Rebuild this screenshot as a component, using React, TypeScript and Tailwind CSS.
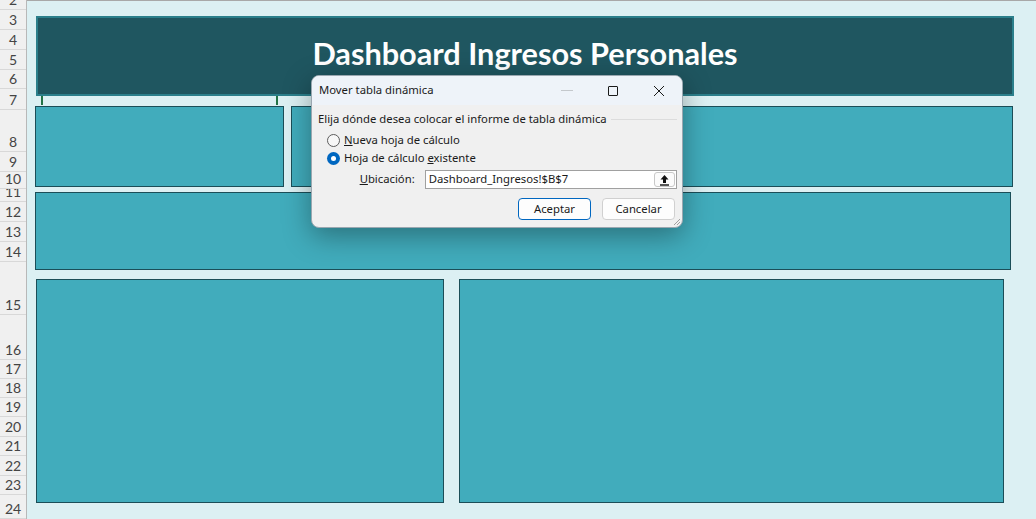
import React from "react";

const rows: { n: number; h: number }[] = [
  { n: 2, h: 10 },
  { n: 3, h: 20 },
  { n: 4, h: 20 },
  { n: 5, h: 20 },
  { n: 6, h: 19 },
  { n: 7, h: 21 },
  { n: 8, h: 42 },
  { n: 9, h: 20 },
  { n: 10, h: 17 },
  { n: 11, h: 13 },
  { n: 12, h: 20 },
  { n: 13, h: 20 },
  { n: 14, h: 20 },
  { n: 15, h: 53 },
  { n: 16, h: 45 },
  { n: 17, h: 19 },
  { n: 18, h: 19 },
  { n: 19, h: 19 },
  { n: 20, h: 20 },
  { n: 21, h: 19 },
  { n: 22, h: 20 },
  { n: 23, h: 19 },
  { n: 24, h: 24 },
];

function RowHeaders() {
  return (
    <div className="w-[27px] shrink-0 flex flex-col bg-[#f0f0f0] border-r border-[#b8b8b8]">
      {rows.map((r) => (
        <div
          key={r.n}
          style={{ height: r.h }}
          className="flex items-end justify-center overflow-hidden border-b border-[#d8d8d8] text-[14px] leading-none text-[#444] pb-[2px]"
        >
          {r.n}
        </div>
      ))}
    </div>
  );
}

function Card({ className }: { className: string }) {
  return <div className={"bg-[#41acbc] border border-[#1b4e58] " + className} />;
}

function Radio({ checked }: { checked?: boolean }) {
  if (checked)
    return (
      <span className="w-[13px] h-[13px] rounded-full bg-[#0067c0] flex items-center justify-center">
        <span className="w-[5px] h-[5px] rounded-full bg-white" />
      </span>
    );
  return <span className="w-[13px] h-[13px] rounded-full border border-[#5c5c5c] bg-[#f7f7f7]" />;
}

function Dialog() {
  return (
    <div
      className="absolute left-[311px] top-[75px] w-[372px] h-[153px] rounded-[8px] overflow-hidden bg-[#f0f0f0] border border-[#9aa7b0] shadow-[0_8px_28px_rgba(0,0,0,0.35)] flex flex-col text-[11.3px] text-[#1a1a1a]"
      style={{ fontFamily: '"Noto Sans", "Liberation Sans", sans-serif' }}
    >
      <div className="h-[29px] shrink-0 bg-[#eef3f9] flex items-center pl-[7px]">
        <span className="flex-1">Mover tabla dinámica</span>
        <span className="w-[46px] flex justify-center">
          <span className="w-[12px] h-px bg-[#c4c8cc]" />
        </span>
        <span className="w-[46px] flex justify-center">
          <span className="w-[10px] h-[10px] border border-[#1a1a1a] rounded-[1px]" />
        </span>
        <span className="w-[46px] flex justify-center">
          <svg width="12" height="12" viewBox="0 0 12 12">
            <path d="M1 1L11 11M11 1L1 11" stroke="#1a1a1a" strokeWidth="1" />
          </svg>
        </span>
      </div>
      <div className="flex-1 flex flex-col pl-[6px] pr-[5px] pt-[6px]">
        <div className="flex items-center gap-[4px] h-[16px]">
          <span>Elija dónde desea colocar el informe de tabla dinámica</span>
          <span className="flex-1 h-px bg-[#dcdcdc]" />
        </div>
        <div className="flex items-center gap-[4px] pl-[9px] mt-[4px] h-[18px]">
          <Radio />
          <span>
            <span className="underline">N</span>ueva hoja de cálculo
          </span>
        </div>
        <div className="flex items-center gap-[4px] pl-[9px] h-[18px]">
          <Radio checked />
          <span>
            Hoja de cálculo <span className="underline">e</span>xistente
          </span>
        </div>
        <div className="flex items-center mt-[3px] h-[19px]">
          <span className="w-[107px] text-right pr-[10px]">
            <span className="underline">U</span>bicación:
          </span>
          <div className="w-[253px] h-[19px] bg-white border border-[#a0a0a0] flex items-center pl-[3px] pr-[1px]">
            <span className="flex-1">Dashboard_Ingresos!$B$7</span>
            <span className="w-[21px] h-[15px] border border-[#c8c8c8] rounded-[3px] flex items-center justify-center bg-[#fbfbfb]">
              <svg width="11" height="12" viewBox="0 0 11 12">
                <path d="M5.5 1L1.5 5.5H4V9H7V5.5H9.5Z" fill="#111" />
                <rect x="1" y="10.3" width="9" height="1.4" fill="#111" />
              </svg>
            </span>
          </div>
        </div>
        <div className="flex justify-end gap-[11px] mt-[9px] pr-[2px]">
          <button className="w-[73px] h-[22px] rounded-[4px] border border-[#0067c0] bg-[#fdfdfd] text-[11.3px]">
            Aceptar
          </button>
          <button className="w-[73px] h-[22px] rounded-[4px] border border-[#d0d0d0] bg-[#fdfdfd] text-[11.3px]">
            Cancelar
          </button>
        </div>
      </div>
      <svg className="absolute right-[1px] bottom-[1px]" width="8" height="8" viewBox="0 0 8 8">
        <path d="M7 1L1 7M7 4L4 7" stroke="#a0a0a0" strokeWidth="1" />
      </svg>
    </div>
  );
}

export default function App() {
  return (
    <div
      className="relative w-[1036px] h-[519px] overflow-hidden flex bg-white"
      style={{ fontFamily: '"Lato", "Open Sans", sans-serif' }}
    >
      <RowHeaders />
      <div className="relative flex-1 bg-[#dcf0f3] border-t border-[#a8a8a8] flex flex-col">
        <div className="ml-[9px] mt-[15px] w-[978px] h-[80px] bg-[#1f5660] border-2 border-[#2b7f8b] flex items-center justify-center pb-[3px]">
          <span className="text-white font-bold text-[30.7px] leading-none">
            Dashboard Ingresos Personales
          </span>
        </div>
        <div className="flex gap-[7px] ml-[8px] mt-[10px] h-[81px]">
          <Card className="w-[249px]" />
          <Card className="w-[722px]" />
        </div>
        <Card className="ml-[8px] mt-[5px] w-[976px] h-[78px]" />
        <div className="flex gap-[15px] ml-[9px] mt-[9px] h-[224px]">
          <Card className="w-[408px]" />
          <Card className="w-[545px]" />
        </div>
        <span className="absolute left-[14px] top-[95px] h-[9px] border-l-2 border-dashed border-[#217346]" />
        <span className="absolute left-[249px] top-[95px] h-[9px] border-l-2 border-dashed border-[#217346]" />
      </div>
      <Dialog />
    </div>
  );
}
